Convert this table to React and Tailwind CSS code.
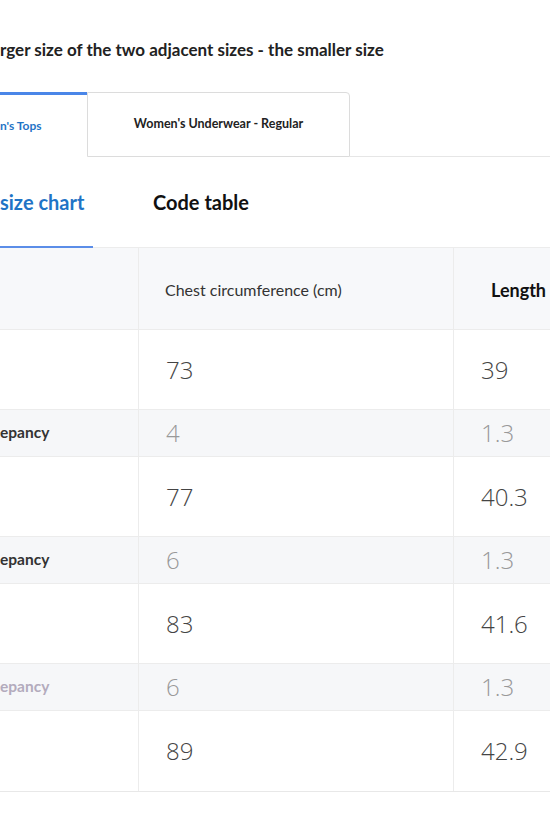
import React from 'react';

const rows = [
  { chest: '73', length: '39' },
  { diff: true, label: 'epancy', chest: '4', length: '1.3' },
  { chest: '77', length: '40.3' },
  { diff: true, label: 'epancy', chest: '6', length: '1.3' },
  { chest: '83', length: '41.6' },
  { diff: true, label: 'epancy', chest: '6', length: '1.3', faded: true },
  { chest: '89', length: '42.9' },
];

function App() {
  return (
    <div className="w-[550px] h-[825px] overflow-hidden bg-white font-['Lato',sans-serif] text-[#222]">
      <div className="h-[92px] pt-[38px]">
        <h2 className="text-[17px] font-bold leading-6 whitespace-nowrap">
          rger size of the two adjacent sizes - the smaller size
        </h2>
      </div>

      {/* category tabs */}
      <div className="flex h-[65px]">
        <div className="w-[87px] border-t-[3px] border-[#4a86e8] flex items-center text-[12px] font-bold text-[#1f74c6] whitespace-nowrap">
          n's Tops
        </div>
        <div className="w-[263px] border border-[#dcdcdc] rounded-tr-[4px] flex items-center justify-center text-[12.5px] font-bold text-[#222]">
          Women's Underwear - Regular
        </div>
        <div className="flex-1 border-b border-[#e6e6e6]"></div>
      </div>

      {/* chart tabs */}
      <div className="flex h-[91px] border-b border-[#ececec] items-stretch">
        <div className="w-[93px] flex items-center border-b-2 border-[#5b8de8] -mb-px text-[20px] font-bold text-[#1f74c6] whitespace-nowrap">
          size chart
        </div>
        <div className="ml-[60px] flex items-center text-[20px] font-bold text-[#111]">
          Code table
        </div>
      </div>

      {/* size table */}
      <div className="border-b border-[#e8e8e8]">
        <div className="grid grid-cols-[139px_315px_1fr] h-[82px] bg-[#f7f8fa] border-b border-[#ececec]">
          <div className="border-r border-[#ececec]"></div>
          <div className="border-r border-[#ececec] flex items-center pt-[3px] pl-[26px] text-[16px] text-[#333]">
            Chest circumference (cm)
          </div>
          <div className="flex items-center pt-[3px] pl-[37px] text-[18px] font-bold text-[#111] whitespace-nowrap">
            Length
          </div>
        </div>
        {rows.map((row, i) => (
          <div
            key={i}
            className={
              'grid grid-cols-[139px_315px_1fr] font-["Open_Sans",sans-serif] font-light text-[24px] ' +
              (i < rows.length - 1 ? 'border-b border-[#ececec] ' : '') +
              (row.diff ? 'h-[47px] bg-[#f6f7f9] text-[#999]' : 'h-[80px] bg-white text-[#444]')
            }
          >
            <div className="border-r border-[#ececec] flex items-center">
              {row.label && (
                <span className={'font-["Lato",sans-serif] font-bold text-[15.5px] ' + (row.faded ? 'text-[#b3abbd]' : 'text-[#333]')}>
                  {row.label}
                </span>
              )}
            </div>
            <div className="border-r border-[#ececec] flex items-center pl-[27px]">{row.chest}</div>
            <div className="flex items-center pl-[27px]">{row.length}</div>
          </div>
        ))}
      </div>
    </div>
  );
}

export default App;
